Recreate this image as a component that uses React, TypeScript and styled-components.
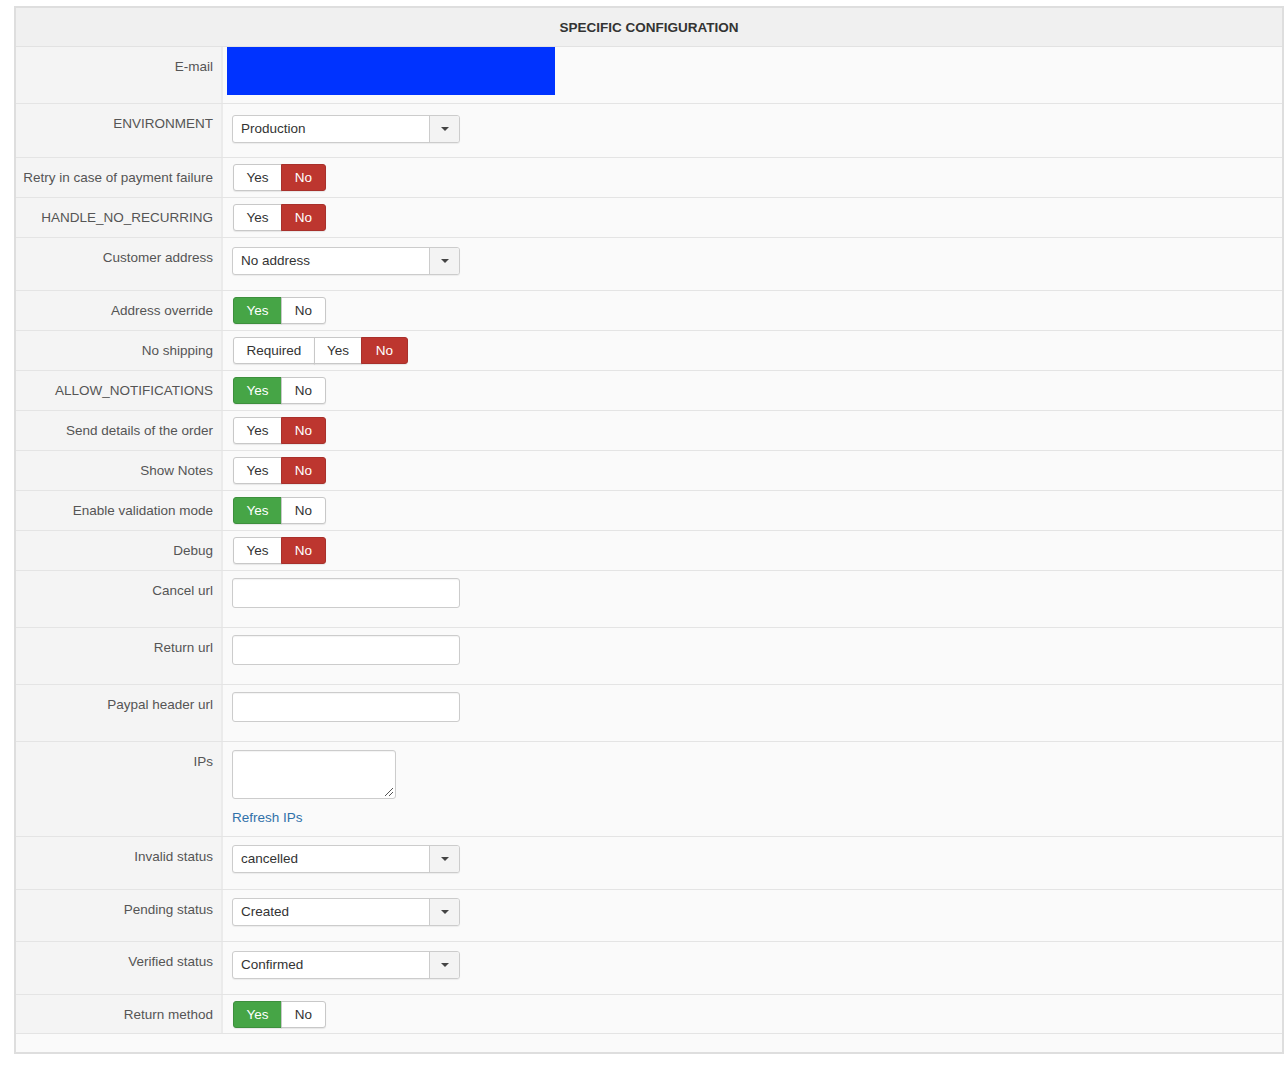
import React from 'react'
import styled, { createGlobalStyle } from 'styled-components'

const GlobalStyle = createGlobalStyle`
  body {
    margin: 0;
    background: #fff;
    font-family: 'Liberation Sans', Arial, sans-serif;
    font-size: 13.5px;
    color: #333;
  }
`

const Panel = styled.section`
  box-sizing: border-box;
  width: 1270px;
  margin: 6px 0 0 14px;
  border: 2px solid #dedede;
  background: #fafafa;
`

const Header = styled.div`
  height: 38px;
  display: flex;
  align-items: center;
  justify-content: center;
  background: #f0f0f0;
  border-bottom: 1px solid #e2e2e2;
  font-weight: bold;
  color: #333;
`

const Row = styled.div`
  display: grid;
  grid-template-columns: 207px 1fr;
  border-bottom: 1px solid #e4e4e4;
`

const Label = styled.div`
  background: #f4f4f4;
  border-right: 2px solid #ebebeb;
  text-align: right;
  padding: 12px 8px 0 0;
  line-height: 16px;
  color: #555;
`

const Value = styled.div<{ $top: number; $bottom: number; $left?: number }>`
  padding: ${p => p.$top}px 0 ${p => p.$bottom}px ${p => p.$left ?? 9}px;
  display: flex;
  flex-direction: column;
  align-items: flex-start;
`

const Footer = styled.div`
  height: 18px;
`

const Redacted = styled.div`
  width: 328px;
  height: 48px;
  background: #0033ff;
`

const ButtonGroup = styled.div`
  display: inline-flex;
  margin-left: 1px;
`

const ToggleButton = styled.span<{ $tone: 'off' | 'red' | 'green'; $width: number }>`
  box-sizing: border-box;
  width: ${p => p.$width}px;
  height: 27px;
  display: flex;
  align-items: center;
  justify-content: center;
  border: 1px solid
    ${p => (p.$tone === 'red' ? '#a8302b' : p.$tone === 'green' ? '#3d8f3d' : '#c8c8c8')};
  background: ${p => (p.$tone === 'red' ? '#bd362f' : p.$tone === 'green' ? '#46a546' : '#fff')};
  color: ${p => (p.$tone === 'off' ? '#333' : '#fff')};
  box-shadow: 0 1px 1px rgba(0, 0, 0, 0.08);

  & + & {
    margin-left: -1px;
  }
  &:first-child {
    border-radius: 3px 0 0 3px;
  }
  &:last-child {
    border-radius: 0 3px 3px 0;
  }
`

const Select = styled.div`
  box-sizing: border-box;
  width: 228px;
  height: 28px;
  display: flex;
  border: 1px solid #ccc;
  border-radius: 3px;
  background: #fff;
  box-shadow: 0 1px 1px rgba(0, 0, 0, 0.06);
`

const SelectText = styled.span`
  flex: 1;
  padding-left: 8px;
  line-height: 26px;
  color: #333;
`

const SelectArrow = styled.span`
  width: 29px;
  border-left: 1px solid #ccc;
  background: #f3f3f3;
  border-radius: 0 2px 2px 0;
  display: flex;
  align-items: center;
  justify-content: center;

  &::after {
    content: '';
    border-left: 4px solid transparent;
    border-right: 4px solid transparent;
    border-top: 4px solid #444;
  }
`

const TextInput = styled.div`
  box-sizing: border-box;
  width: 228px;
  height: 30px;
  border: 1px solid #ccc;
  border-radius: 3px;
  background: #fff;
  box-shadow: inset 0 1px 1px rgba(0, 0, 0, 0.05);
`

const TextArea = styled.div`
  box-sizing: border-box;
  position: relative;
  width: 164px;
  height: 49px;
  border: 1px solid #ccc;
  border-radius: 3px;
  background: #fff;
  box-shadow: inset 0 1px 1px rgba(0, 0, 0, 0.05);
`

const Grip = styled.svg`
  position: absolute;
  right: 1px;
  bottom: 1px;
`

const Link = styled.a`
  margin-top: 11px;
  color: #3071a9;
  text-decoration: none;
  line-height: 16px;
`

const YesNo = ({ on }: { on: boolean }) => (
  <ButtonGroup>
    <ToggleButton $width={49} $tone={on ? 'green' : 'off'}>Yes</ToggleButton>
    <ToggleButton $width={45} $tone={on ? 'off' : 'red'}>No</ToggleButton>
  </ButtonGroup>
)

const Dropdown = ({ value }: { value: string }) => (
  <Select>
    <SelectText>{value}</SelectText>
    <SelectArrow />
  </Select>
)

const SwitchRow = ({ label, on, bottom = 6 }: { label: string; on: boolean; bottom?: number }) => (
  <Row>
    <Label>{label}</Label>
    <Value $top={6} $bottom={bottom}>
      <YesNo on={on} />
    </Value>
  </Row>
)

const SelectRow = ({
  label,
  value,
  top = 8,
  bottom = 16,
}: {
  label: string
  value: string
  top?: number
  bottom?: number
}) => (
  <Row>
    <Label>{label}</Label>
    <Value $top={top} $bottom={bottom}>
      <Dropdown value={value} />
    </Value>
  </Row>
)

const InputRow = ({ label }: { label: string }) => (
  <Row>
    <Label>{label}</Label>
    <Value $top={7} $bottom={19}>
      <TextInput />
    </Value>
  </Row>
)

const App = () => (
  <>
    <GlobalStyle />
    <Panel>
      <Header>SPECIFIC CONFIGURATION</Header>

      <Row>
        <Label>E-mail</Label>
        <Value $top={0} $bottom={8} $left={4}>
          <Redacted />
        </Value>
      </Row>

      <SelectRow label='ENVIRONMENT' value='Production' top={11} bottom={14} />
      <SwitchRow label='Retry in case of payment failure' on={false} />
      <SwitchRow label='HANDLE_NO_RECURRING' on={false} />
      <SelectRow label='Customer address' value='No address' top={9} bottom={15} />
      <SwitchRow label='Address override' on />

      <Row>
        <Label>No shipping</Label>
        <Value $top={6} $bottom={6}>
          <ButtonGroup>
            <ToggleButton $width={82} $tone='off'>Required</ToggleButton>
            <ToggleButton $width={48} $tone='off'>Yes</ToggleButton>
            <ToggleButton $width={47} $tone='red'>No</ToggleButton>
          </ButtonGroup>
        </Value>
      </Row>

      <SwitchRow label='ALLOW_NOTIFICATIONS' on />
      <SwitchRow label='Send details of the order' on={false} />
      <SwitchRow label='Show Notes' on={false} />
      <SwitchRow label='Enable validation mode' on />
      <SwitchRow label='Debug' on={false} />

      <InputRow label='Cancel url' />
      <InputRow label='Return url' />
      <InputRow label='Paypal header url' />

      <Row>
        <Label>IPs</Label>
        <Value $top={8} $bottom={10}>
          <TextArea>
            <Grip width='12' height='12' viewBox='0 0 12 12'>
              <path d='M11 3 L3 11 M11 7 L7 11' stroke='#555' strokeWidth='1' fill='none' />
            </Grip>
          </TextArea>
          <Link href='#'>Refresh IPs</Link>
        </Value>
      </Row>

      <SelectRow label='Invalid status' value='cancelled' />
      <SelectRow label='Pending status' value='Created' bottom={15} />
      <SelectRow label='Verified status' value='Confirmed' top={9} bottom={15} />
      <SwitchRow label='Return method' on bottom={5} />

      <Footer />
    </Panel>
  </>
)

export default App
